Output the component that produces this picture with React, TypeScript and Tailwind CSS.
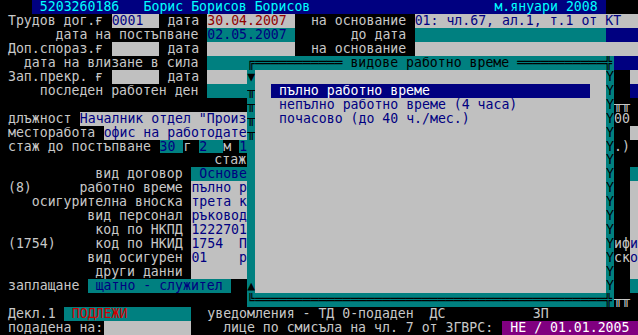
import React from "react";

// one text-mode cell is 7.975 x 13.96 px (80 x 24 screen)
const CW = 7.975;
const COLS = 80;

type Key = "k" | "n" | "t" | "g" | "l" | "w" | "c" | "r" | "R" | "p";
type Cell = { ch: string; fg: Key; bg: Key };
type Seg = { col: number; text: string; fg: Key; bg: Key };

const FG: Record<Key, string> = {
  k: "text-black",
  n: "text-[#000080]",
  t: "text-[#008080]",
  g: "text-[#c0c0c0]",
  l: "text-[#c8c8c8]",
  w: "text-white",
  c: "text-[#00ffff]",
  r: "text-[#900000]",
  R: "text-[#d00000]",
  p: "text-[#800080]",
};

const BG: Record<Key, string> = {
  k: "bg-black",
  n: "bg-[#000080]",
  t: "bg-[#008080]",
  g: "bg-[#c0c0c0]",
  l: "bg-[#c8c8c8]",
  w: "bg-white",
  c: "bg-[#00ffff]",
  r: "bg-[#900000]",
  R: "bg-[#d00000]",
  p: "bg-[#800080]",
};

const t = (col: number, text: string, fg: Key = "l", bg: Key = "k"): Seg => ({ col, text, fg, bg });
const f = (col: number, len: number, bg: Key): Seg => ({ col, text: " ".repeat(len), fg: "l", bg });

const eq = (n: number) => "═".repeat(n);

// popup pieces (cols 31..76), shadow cols 77..79
const body = (left: string, rest: Seg[] = [], shadow: Seg[] = []): Seg[] => [
  t(31, left, "k", "t"),
  f(32, 44, "g"),
  ...rest,
  t(76, "Y", "k", "t"),
  ...shadow,
];

const rows: Seg[][] = [
  [
    f(4, 72, "n"),
    t(5, "5203260186", "c", "n"),
    t(18, "Борис Борисов Борисов", "c", "n"),
    t(62, "м.януари 2008", "c", "n"),
  ],
  [
    t(1, "Трудов дог."),
    t(12, "ғ"),
    f(14, 6, "g"),
    t(14, "0001", "n", "g"),
    t(21, "дата"),
    f(26, 11, "g"),
    t(26, "30.04.2007", "r", "g"),
    t(39, "на основание"),
    f(52, 28, "g"),
    t(52, "01: чл.67, ал.1, т.1 от КТ", "n", "g"),
  ],
  [
    t(7, "дата на постъпване"),
    f(26, 11, "t"),
    t(26, "02.05.2007", "n", "t"),
    t(44, "до дата"),
    f(52, 24, "t"),
    f(76, 4, "n"),
  ],
  [
    t(1, "Доп.спораз."),
    t(12, "ғ"),
    f(14, 6, "g"),
    t(21, "дата"),
    f(26, 11, "g"),
    t(39, "на основание"),
    f(52, 28, "g"),
  ],
  [
    t(3, "дата на влизане в сила"),
    f(26, 5, "t"),
    t(31, "╔" + eq(11) + " видове работно време " + eq(11) + "╬", "k", "t"),
    f(77, 3, "n"),
  ],
  [
    t(1, "Зап.прекр."),
    t(12, "ғ"),
    f(14, 6, "g"),
    t(21, "дата"),
    f(26, 5, "g"),
    ...body("▼", [], [f(79, 1, "g")]),
  ],
  [
    t(5, "последен работен ден"),
    f(26, 5, "t"),
    ...body("╥", [f(34, 40, "n"), t(34, " пълно работно време", "w", "n")], [f(79, 1, "n")]),
  ],
  [...body("╥", [t(35, "непълно работно време (4 часа)", "n", "g")], [t(77, "╥╥")])],
  [
    t(1, "длъжност"),
    t(10, 'Началник отдел "Произ', "n", "g"),
    ...body("╥", [t(35, "почасово (до 40 ч./мес.)", "n", "g")], [t(77, "00")]),
  ],
  [t(1, "месторабота"), t(13, "офис на работодате", "n", "g"), ...body("╥", [], [f(79, 1, "g")])],
  [
    t(1, "стаж до постъпване"),
    f(20, 3, "t"),
    t(20, "30", "n", "t"),
    t(23, "г"),
    f(25, 3, "t"),
    t(25, "2", "n", "t"),
    t(28, "м"),
    t(30, "1", "n", "t"),
    ...body(" ", [], [t(77, ".)")]),
  ],
  [t(27, "стаж"), ...body(" ")],
  [t(12, "вид договор"), t(24, " Основе", "n", "t"), ...body(" ", [], [f(79, 1, "t")])],
  [t(1, "(8)"), t(10, "работно време"), t(24, "пълно р", "n", "g"), ...body(" ", [], [f(79, 1, "g")])],
  [t(4, "осигурителна вноска"), t(24, "трета к", "n", "g"), ...body(" ", [], [f(79, 1, "g")])],
  [t(11, "вид персонал"), t(24, "ръковод", "n", "g"), ...body(" ", [], [f(79, 1, "g")])],
  [t(12, "код по НКПД"), t(24, "1222701", "n", "g"), ...body(" ", [], [f(79, 1, "g")])],
  [
    t(1, "(1754)"),
    t(12, "код по НКИД"),
    t(24, "1754  П", "n", "g"),
    ...body(" ", [], [t(77, "иф"), t(79, "и", "n", "g")]),
  ],
  [
    t(11, "вид осигурен"),
    t(24, "01    р", "n", "g"),
    ...body(" ", [], [t(77, "ск"), t(79, "о", "n", "g")]),
  ],
  [t(12, "други данни"), f(24, 7, "g"), ...body(" ", [], [f(79, 1, "g")])],
  [t(1, "заплащане"), t(11, " щатно - служител ", "n", "t"), ...body("▲", [], [f(79, 1, "t")])],
  [t(31, "╚" + eq(44) + "╬", "k", "t"), t(77, "╥╥")],
  [
    t(1, "Декл.1"),
    f(8, 16, "t"),
    t(9, "ПОДЛЕЖИ", "R", "t"),
    t(26, "уведомления - ТД 0-подаден"),
    t(54, "ДС"),
    t(67, "ЗП"),
  ],
  [
    t(1, "подадена на:"),
    f(13, 11, "g"),
    t(28, "лице по смисъла на чл. 7 от ЗГВРС:"),
    t(63, " НЕ / 01.01.2005 ", "w", "p"),
  ],
];

function buildRuns(segs: Seg[]) {
  const cells: Cell[] = Array.from({ length: COLS }, () => ({ ch: " ", fg: "l" as Key, bg: "k" as Key }));
  for (const s of segs) {
    Array.from(s.text).forEach((ch, i) => {
      const c = s.col + i;
      if (c < COLS) cells[c] = { ch, fg: s.fg, bg: s.bg };
    });
  }
  const runs: { text: string; fg: Key; bg: Key; len: number }[] = [];
  for (const c of cells) {
    const last = runs[runs.length - 1];
    if (last && last.fg === c.fg && last.bg === c.bg) {
      last.text += c.ch;
      last.len++;
    } else {
      runs.push({ text: c.ch, fg: c.fg, bg: c.bg, len: 1 });
    }
  }
  return runs;
}

function Row({ segs }: { segs: Seg[] }) {
  const runs = buildRuns(segs);
  return (
    <div className="flex h-[13.96px]">
      {runs.map((r, i) => (
        <span
          key={i}
          className={`block h-full shrink-0 overflow-hidden whitespace-pre ${FG[r.fg]} ${BG[r.bg]}`}
          style={{ width: r.len * CW }}
        >
          {r.text}
        </span>
      ))}
    </div>
  );
}

export default function App() {
  return (
    <div className="w-[638px] h-[335px] overflow-hidden bg-black font-['DejaVu_Sans_Mono',monospace] text-[13.2px] leading-[13.96px]">
      {rows.map((segs, i) => (
        <Row key={i} segs={segs} />
      ))}
    </div>
  );
}
